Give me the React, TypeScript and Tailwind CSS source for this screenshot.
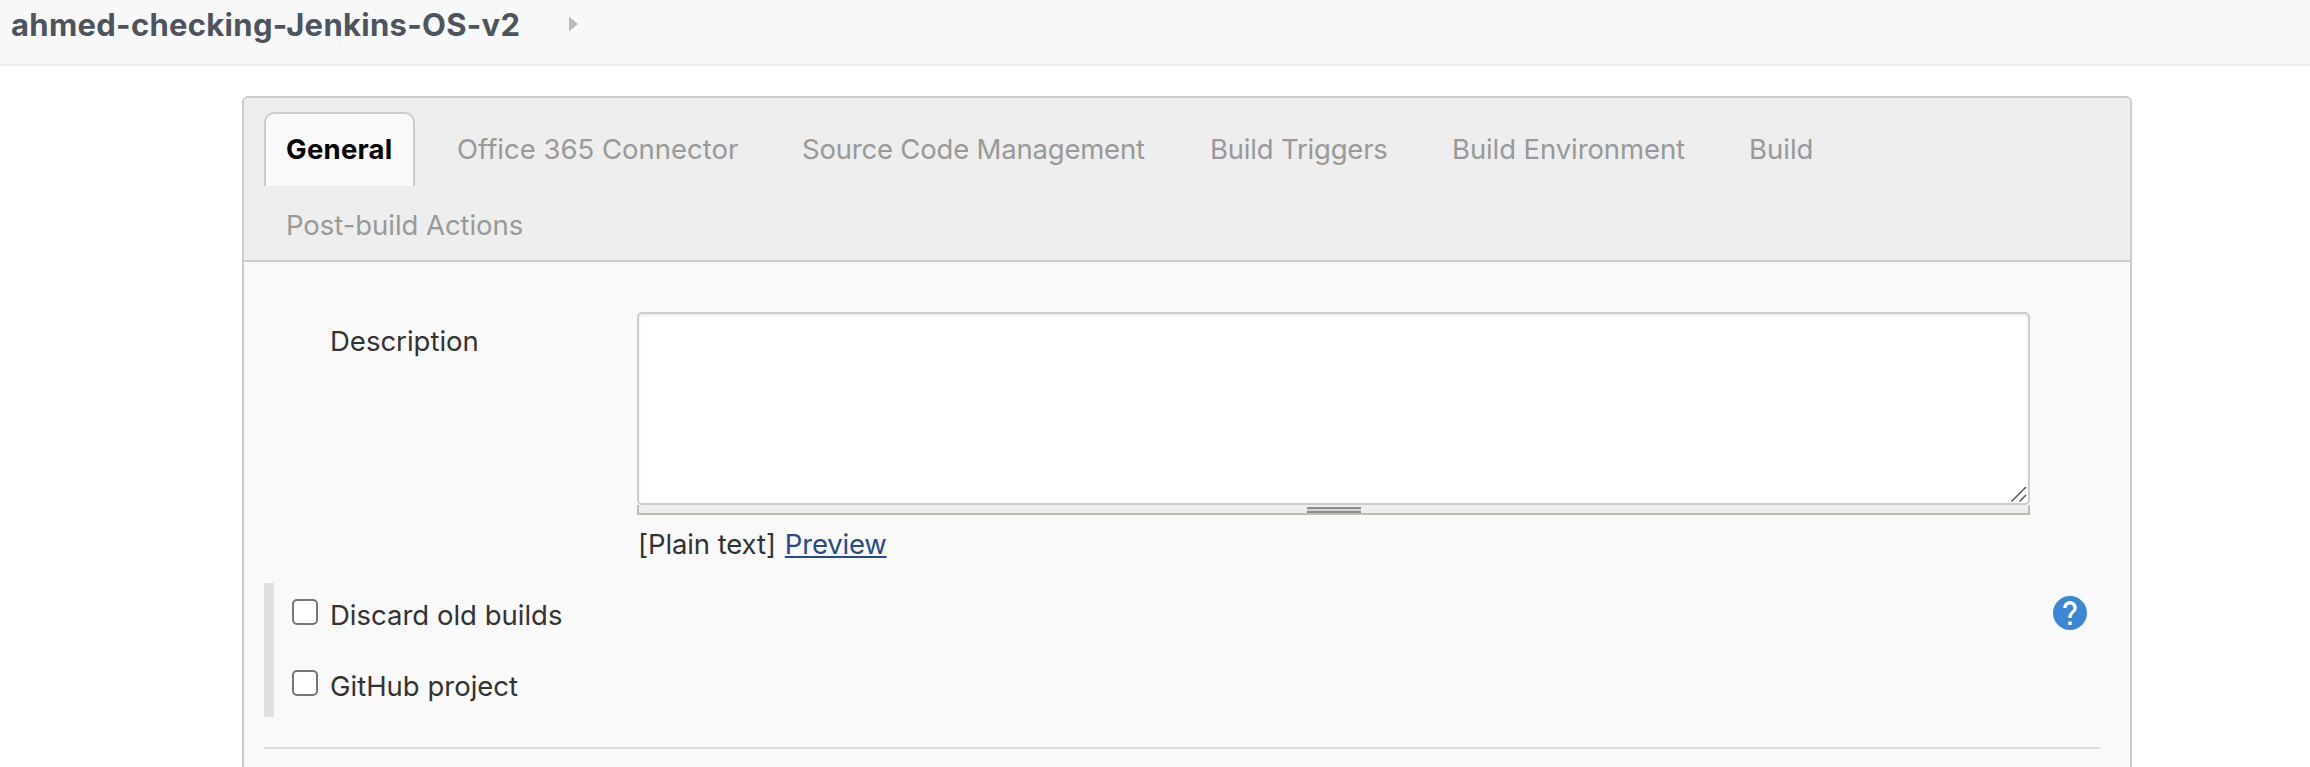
import React from "react";

const tabs = [
  { label: "Office 365 Connector", cls: "w-[345px]" },
  { label: "Source Code Management", cls: "w-[408px] tracking-[-0.2px]" },
  { label: "Build Triggers", cls: "w-[242px] tracking-[-0.2px]" },
  { label: "Build Environment", cls: "w-[297px] tracking-[-0.1px]" },
  { label: "Build", cls: "w-[105px]" },
];

function HelpIcon() {
  return (
    <svg viewBox="2 2 20 20" className="ml-auto mr-[13px] size-[34px] translate-y-px">
      <circle cx="12" cy="12" r="9.500" fill="#fff" />
      <path
        fill="#3b87d3"
        d="M12 2C6.480 2 2 6.480 2 12s4.480 10 10 10 10-4.480 10-10S17.520 2 12 2zm1 17h-2v-2h2v2zm2.070-7.750l-.9.920C13.450 12.900 13 13.500 13 15h-2v-.5c0-1.100.450-2.100 1.170-2.830l1.240-1.260c.370-.360.590-.860.590-1.410 0-1.100-.9-2-2-2s-2 .9-2 2H8c0-2.210 1.790-4 4-4s4 1.790 4 4c0 .880-.360 1.680-.930 2.250z"
      />
    </svg>
  );
}

function CheckRow({ label, help }: { label: string; help?: boolean }) {
  return (
    <div className="flex h-[26px] items-center">
      <input
        type="checkbox"
        aria-label={label}
        className="size-[26px] shrink-0 appearance-none rounded-[5px] border-2 border-[#767676] bg-white"
      />
      <span className="ml-[12px] h-[34px] translate-y-[3px] whitespace-nowrap leading-[34px]">
        {label}
      </span>
      {help && <HelpIcon />}
    </div>
  );
}

export default function App() {
  return (
    <div className="h-[767px] w-[2310px] overflow-hidden bg-white font-['Inter',sans-serif] text-[27.5px] text-[#333]">
      <header className="flex h-[66px] items-start border-b-2 border-[#e9edf1] bg-[#f8f8f8] pl-[11px]">
        <span className="mt-[5px] w-[558px] whitespace-nowrap text-[31px] font-bold leading-[40px] tracking-[0.3px] text-[#4d545d]">
          ahmed-checking-Jenkins-OS-v2
        </span>
        <svg viewBox="0 0 9 16" className="mt-[16px] h-[16px] w-[9px]">
          <path d="M0 0.500 9 8 0 15.500Z" fill="#bbb" />
        </svg>
      </header>

      <main className="ml-[242px] mt-[30px] h-[700px] w-[1890px] rounded-t-[6px] border-2 border-[#ccc] bg-[#f9f9f9]">
        <nav className="h-[164px] rounded-t-[4px] border-b-2 border-[#ccc] bg-[#eee] pl-[20px] pt-[14px] text-[#999]">
          <div className="flex h-[74px] leading-[70px]">
            <div className="h-[74px] w-[151px] whitespace-nowrap rounded-t-[10px] border-2 border-b-0 border-[#ccc] bg-[#f9f9f9] pl-[20px] font-bold tracking-[0.25px] text-black">
              General
            </div>
            <div className="ml-[42px] flex pt-[2px]">
              {tabs.map((t) => (
                <div key={t.label} className={`${t.cls} whitespace-nowrap`}>
                  {t.label}
                </div>
              ))}
            </div>
          </div>
          <div className="mt-[4px] pl-[22px] leading-[70px] tracking-[-0.05px]">
            <span>Post-build Actions</span>
          </div>
        </nav>

        <section className="flex pl-[86px] pt-[50px]">
          <div className="w-[307px] pt-[12px] leading-[34px]">
            <span>Description</span>
          </div>
          <div className="w-[1393px]">
            <div className="flex h-[193px] items-end justify-end rounded-[5px] border-2 border-[#ccc] bg-white shadow-[inset_0_2px_3px_rgba(0,0,0,0.08)]">
              <svg viewBox="0 0 16 16" className="mb-px mr-px size-[16px]" stroke="#555" strokeWidth="1.500">
                <path d="M0.500 15.500 15 1M8.500 15.500 15 9" />
              </svg>
            </div>
            <div className="flex h-[10px] justify-center border-2 border-t-0 border-[#bdbdb5] bg-[#eee] pt-[2px]">
              <div className="h-[6px] w-[54px] border-y-2 border-[#8e8e8e] bg-[#d4d4d4]" />
            </div>
            <div className="ml-[1px] mt-[12px] whitespace-nowrap leading-[34px]">
              <span className="tracking-[-0.1px]">[Plain text]</span>
              <a className="ml-[9px] text-[#284a88] tracking-[-0.2px] underline decoration-2 underline-offset-[2px]">
                Preview
              </a>
            </div>
          </div>
        </section>

        <section className="ml-[20px] mt-[22px] flex h-[134px] w-[1836px] flex-col gap-[45px] border-l-[10px] border-[#dfdfdf] pl-[18px] pt-[16px]">
          <CheckRow label="Discard old builds" help />
          <CheckRow label="GitHub project" />
        </section>
        <div className="ml-[20px] mt-[30px] h-[2px] w-[1836px] bg-[#ddd]" />
      </main>
    </div>
  );
}
